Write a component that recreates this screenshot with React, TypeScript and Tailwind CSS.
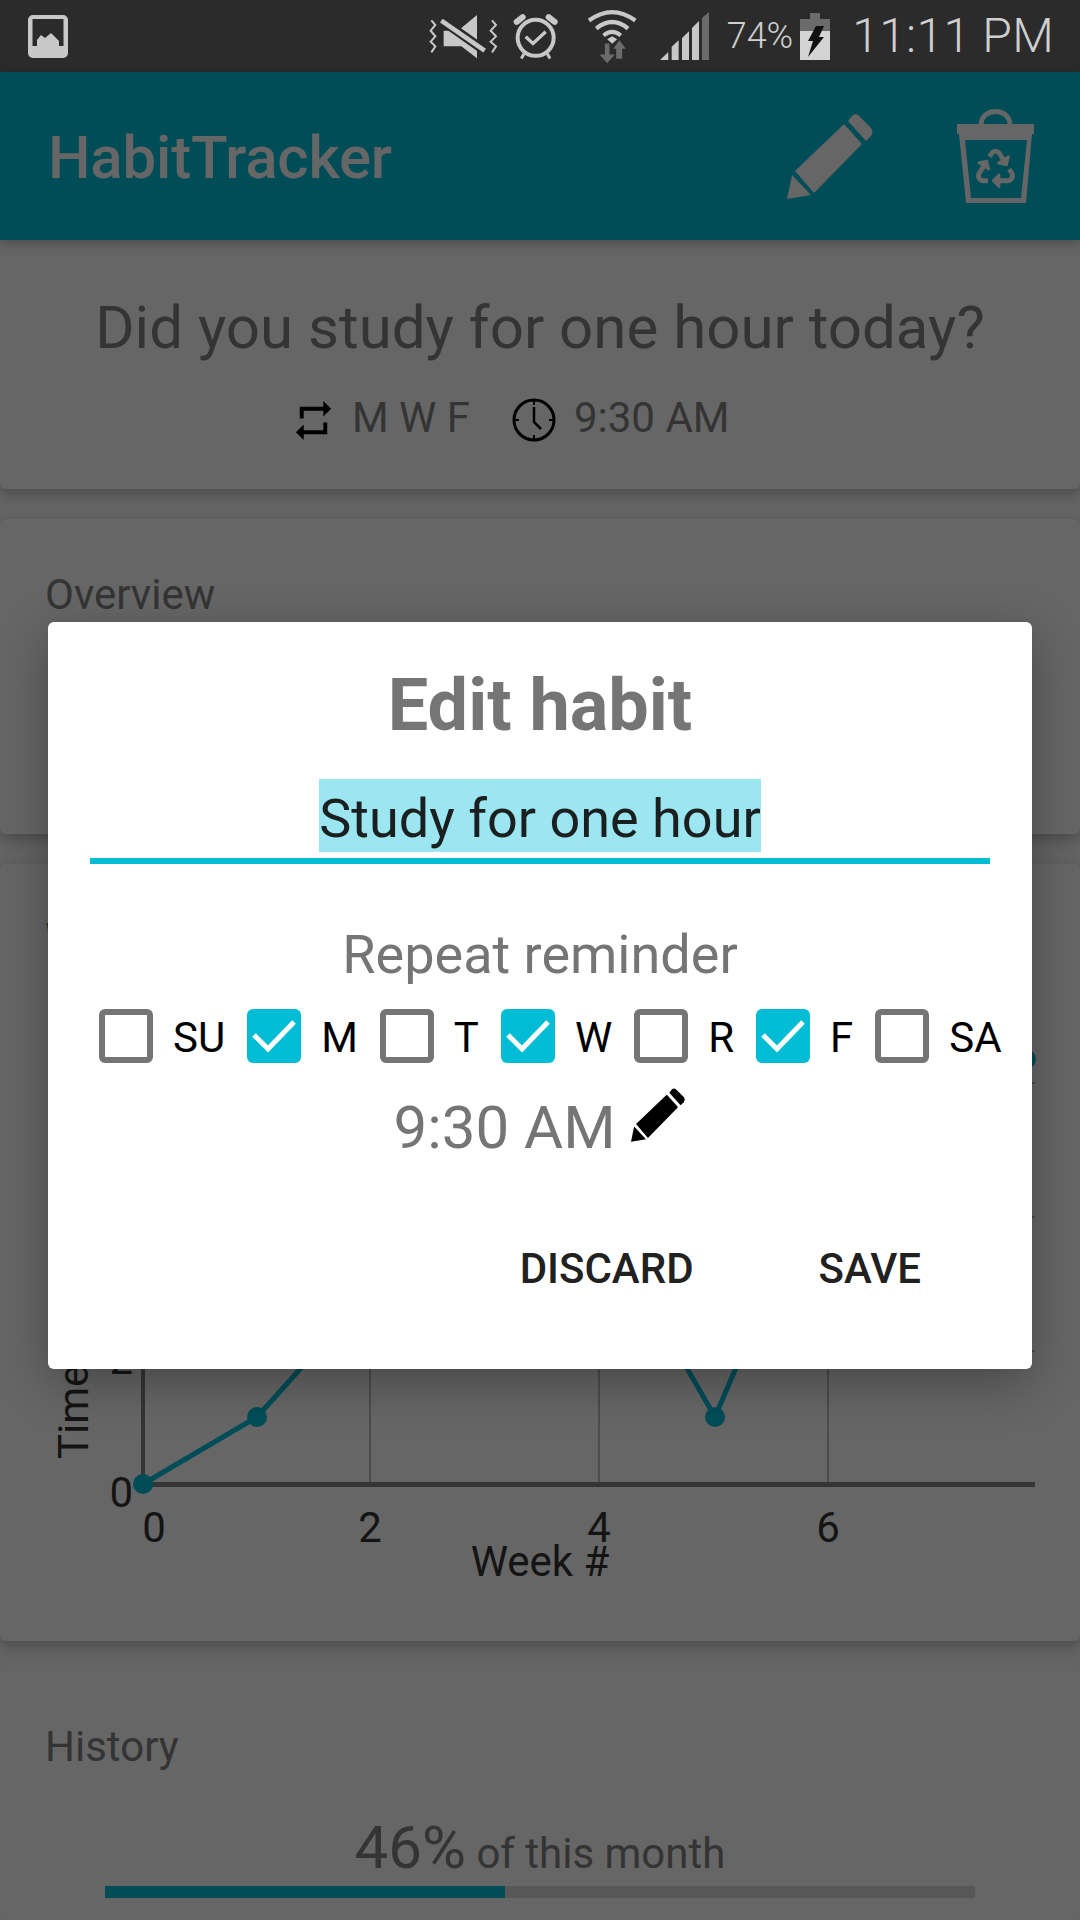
import { MdRepeat } from 'react-icons/md';
import { FaRecycle } from 'react-icons/fa';

const days = [
  { label: 'SU', on: false },
  { label: 'M', on: true },
  { label: 'T', on: false },
  { label: 'W', on: true },
  { label: 'R', on: false },
  { label: 'F', on: true },
  { label: 'SA', on: false },
];

function Pencil({ className }: { className: string }) {
  return (
    <svg viewBox="0 0 86 85" className={className} fill="currentColor">
      <path d="M0 85 L5 61 L24 81 Z" />
      <path d="M8 57 L56 11 Q57 10 58 11 L74 29 Q75 30 74 31 L27 79 Z" />
      <path d="M61 7 L65 2 Q68 -1 71 1 L84 14 Q87 18 84 22 L79 27 Z" />
    </svg>
  );
}

function TrashIcon() {
  return (
    <svg viewBox="0 0 77 94" className="w-[77px] h-[94px] text-[#666666]" fill="currentColor">
      <path d="M24 16 C24 -2 53 -2 53 16" fill="none" stroke="currentColor" strokeWidth="5" />
      <rect x="0" y="15" width="77" height="10" />
      <path fillRule="evenodd" d="M2 25 H75 L69 94 H9 Z M8 31 L14 89 H64 L70 31 Z" />
      <FaRecycle x={19} y={40} size={39} />
    </svg>
  );
}

function ImageNote() {
  return (
    <svg viewBox="0 0 40 43" className="w-[40px] h-[43px]">
      <rect width="40" height="43" rx="5" fill="#c8c8c8" />
      <rect x="4.5" y="4" width="31" height="27" fill="#2b2b2b" />
      <path d="M9 25 L13 20 L17 23 L23 18 L31 26 V31 H9 Z" fill="#c8c8c8" />
    </svg>
  );
}

function MuteIcon() {
  return (
    <svg viewBox="20 25 210 135" className="w-[70px] h-[45px]" fill="none">
      <path d="M30 44 L42 58 L28 75 L42 92 L28 108 L42 122 L30 140" stroke="#c8c8c8" strokeWidth="6" />
      <path d="M212 44 L224 58 L208 75 L224 92 L208 108 L224 122 L212 140" stroke="#c8c8c8" strokeWidth="6" />
      <path d="M67 75 H110 L167 28 V158 L120 122 H67 Z" fill="#c8c8c8" />
      <path d="M50 36 L200 142" stroke="#2b2b2b" strokeWidth="28" />
      <path d="M60 45 L190 135" stroke="#c8c8c8" strokeWidth="14" />
    </svg>
  );
}

function AlarmIcon() {
  return (
    <svg viewBox="270 24 138 140" className="w-[46px] h-[47px]" fill="none" stroke="#c8c8c8">
      <path d="M281 50 L299 36" strokeWidth="18" strokeLinecap="round" />
      <path d="M395 50 L377 36" strokeWidth="18" strokeLinecap="round" />
      <circle cx="338" cy="98" r="54" strokeWidth="12" />
      <path d="M308 95 L330 115 L368 80" strokeWidth="10" />
      <path d="M303 146 L295 160 M373 146 L381 160" strokeWidth="9" />
    </svg>
  );
}

function WifiIcon() {
  return (
    <svg viewBox="22 8 152 166" className="w-[51px] h-[55px]" fill="none">
      <path d="M30 43 Q100 -8 170 43" stroke="#c8c8c8" strokeWidth="13" />
      <path d="M52 67 Q100 28 148 67" stroke="#c8c8c8" strokeWidth="13" />
      <path d="M74 88 Q100 66 126 88" stroke="#c8c8c8" strokeWidth="12" />
      <path d="M85 99 L100 90 L115 99 L100 113 Z" fill="#c8c8c8" />
      <path d="M78 112 H92 V145 H108 L85 172 L62 145 H78 Z" fill="#6b6b6b" />
      <path d="M112 158 V128 H103 L122 102 L141 128 H130 V158 Z" fill="#6b6b6b" />
    </svg>
  );
}

function SignalIcon() {
  return (
    <svg viewBox="243 20 147 144" className="w-[49px] h-[48px]">
      <path d="M243 164 L268 140 V164 Z" fill="#c8c8c8" />
      <path d="M278 164 V124 L299 105 V164 Z" fill="#c8c8c8" />
      <path d="M309 164 V98 L330 78 V164 Z" fill="#c8c8c8" />
      <path d="M339 164 V68 L360 47 V164 Z" fill="#c8c8c8" />
      <path d="M369 164 V38 L390 20 V164 Z" fill="#6b6b6b" />
    </svg>
  );
}

function BatteryIcon() {
  return (
    <svg viewBox="0 0 30 47" className="w-[30px] h-[47px]">
      <rect x="10" y="0" width="10" height="7" fill="#6b6b6b" />
      <rect x="0" y="6" width="30" height="12" fill="#6b6b6b" />
      <rect x="0" y="18" width="30" height="29" fill="#d4d4d4" />
      <path d="M16 13 H24 L19 24 H24 L8 44 L13 28 H8 Z" fill="#111111" />
    </svg>
  );
}

function ClockIcon() {
  return (
    <svg viewBox="0 0 44 44" className="w-[44px] h-[44px] ml-[42px] shrink-0" fill="none" stroke="#000000">
      <circle cx="22" cy="22" r="20" strokeWidth="3" />
      <path d="M22 2 V7 M22 37 V42 M2 22 H7 M37 22 H42" strokeWidth="2" />
      <path d="M22 9 V24 L29 31" strokeWidth="2.5" />
    </svg>
  );
}

function WeekChart() {
  return (
    <svg viewBox="0 964 1080 626" className="block w-[1080px] h-[626px] font-[Roboto,sans-serif]" fill="none">
      <path d="M370 1000 V1484 M599 1000 V1484 M828 1000 V1484" stroke="#333333" strokeWidth="1" />
      <path d="M143 1351 H1035 M143 1217 H1035 M143 1083 H1035" stroke="#333333" strokeWidth="1" />
      <path d="M143 1000 V1484" stroke="#353535" strokeWidth="4" />
      <path d="M141 1484.5 H1035" stroke="#353535" strokeWidth="5" />
      <polyline points="143,1484 257,1417 372,1289 486,1217 600,1217 715,1417 829,1150 1026,1059" stroke="#004d58" strokeWidth="5" />
      <g fill="#004d58">
        <circle cx="143" cy="1484" r="10" />
        <circle cx="257" cy="1417" r="10" />
        <circle cx="715" cy="1417" r="10" />
        <circle cx="1026" cy="1059" r="10" />
      </g>
      <g fill="#141414" fontSize="42">
        <text x="133" y="1507" textAnchor="end">0</text>
        <text x="133" y="1374" textAnchor="end">2</text>
        <text x="154" y="1542" textAnchor="middle">0</text>
        <text x="370" y="1542" textAnchor="middle">2</text>
        <text x="599" y="1542" textAnchor="middle">4</text>
        <text x="828" y="1542" textAnchor="middle">6</text>
        <text x="540" y="1576" textAnchor="middle">Week #</text>
        <text x="88" y="1459" transform="rotate(-90 88 1459)">Time</text>
      </g>
    </svg>
  );
}

function DayCheck({ label, on }: { label: string; on: boolean }) {
  return (
    <div className="flex items-start">
      {on ? (
        <div className="w-[54px] h-[54px] rounded-[6px] bg-[#00bcd4]">
          <svg viewBox="0 0 54 54" className="w-[54px] h-[54px]" fill="none">
            <path d="M7 26 L21 40 L47 13" stroke="#ffffff" strokeWidth="5" />
          </svg>
        </div>
      ) : (
        <div className="w-[54px] h-[54px] rounded-[6px] border-[6px] border-[#757575]" />
      )}
      <span className="ml-[20px] text-[42px] leading-[58px] text-black">{label}</span>
    </div>
  );
}

export default function App() {
  return (
    <div className="relative w-[1080px] h-[1920px] overflow-hidden bg-[#646464] font-[Roboto,sans-serif]">
      {/* status bar */}
      <div className="flex items-center h-[72px] pl-[28px] pr-[26px] bg-[#2b2b2b]">
        <ImageNote />
        <div className="ml-auto flex items-center">
          <MuteIcon />
          <div className="ml-[15px]"><AlarmIcon /></div>
          <div className="ml-[27px]"><WifiIcon /></div>
          <div className="ml-[23px]"><SignalIcon /></div>
          <span className="ml-[18px] text-[36px] font-light text-[#cfcfcf]">74%</span>
          <div className="ml-[7px]"><BatteryIcon /></div>
          <span className="ml-[22px] text-[48px] font-light tracking-[0.3px] text-[#cfcfcf]">11:11 PM</span>
        </div>
      </div>

      {/* app bar */}
      <div className="relative z-10 flex items-center h-[168px] pl-[48px] bg-[#004d58] shadow-[0_4px_12px_rgba(0,0,0,0.25)]">
        <span className="mt-[4px] text-[60px] font-medium tracking-[-0.2px] text-[#666666]">HabitTracker</span>
        <Pencil className="ml-auto w-[86px] h-[85px] text-[#666666]" />
        <div className="ml-[84px] mr-[46px]"><TrashIcon /></div>
      </div>

      {/* cards under the dim */}
      <div className="flex flex-col">
        <div className="h-[249px] pt-[53px] rounded-[6px] bg-[#666666] text-[#343434] shadow-[0_5px_14px_rgba(0,0,0,0.25)]">
          <div className="text-center text-[60px] leading-[70px]">Did you study for one hour today?</div>
          <div className="flex items-center h-[54px] mt-[30px] pl-[290px]">
            <MdRepeat size={47} color="#000000" className="shrink-0" />
            <span className="self-start ml-[15px] text-[42px] leading-[50px]">M W F</span>
            <ClockIcon />
            <span className="self-start ml-[18px] text-[42px] leading-[50px]">9:30 AM</span>
          </div>
        </div>

        <div className="h-[315px] mt-[30px] pt-[51px] pl-[45px] rounded-[6px] bg-[#666666] text-[#343434] text-[42px] leading-[50px] shadow-[0_5px_14px_rgba(0,0,0,0.25)]">
          Overview
        </div>

        <div className="h-[777px] mt-[30px] pt-[50px] rounded-[6px] bg-[#666666] text-[#343434] shadow-[0_5px_14px_rgba(0,0,0,0.25)]">
          <div className="pl-[45px] text-[42px] leading-[50px]">W</div>
          <WeekChart />
        </div>

        <div className="h-[249px] mt-[30px] pt-[51px] rounded-[6px] bg-[#666666] text-[#343434]">
          <div className="pl-[45px] text-[42px] leading-[50px]">History</div>
          <div className="h-[70px] mt-[41px] text-center text-[42px] leading-[70px]">
            <span className="text-[60px]">46%</span> of this month
          </div>
          <div className="h-[12px] mt-[3px] mx-[105px] bg-[#575757]">
            <div className="w-[46%] h-full bg-[#004d58]" />
          </div>
        </div>
      </div>

      {/* edit dialog */}
      <div className="absolute z-20 left-[48px] top-[622px] w-[984px] h-[747px] pt-[42px] rounded-[6px] bg-white shadow-[0_14px_50px_rgba(0,0,0,0.3)]">
        <div className="text-center text-[72px] leading-[84px] font-bold text-[#757575]">Edit habit</div>

        <div className="mt-[31px] mx-[42px] pb-[6px] border-b-[6px] border-[#00bcd4] text-center">
          <span className="inline-block align-top h-[73px] bg-[#9ce6f1] text-[54px] leading-[79px] text-[#1a1f20]">
            Study for one hour
          </span>
        </div>

        <div className="mt-[59px] text-center text-[54px] leading-[64px] text-[#757575]">Repeat reminder</div>

        <div className="flex mt-[22px] pl-[51px] gap-[22px]">
          {days.map((d) => (
            <DayCheck key={d.label} label={d.label} on={d.on} />
          ))}
        </div>

        <div className="flex items-start justify-center mt-[21px] pr-[2px]">
          <span className="mt-[5px] text-[60px] leading-[70px] text-[#757575]">9:30 AM</span>
          <Pencil className="ml-[15px] w-[54px] h-[54px] text-black" />
        </div>

        <div className="flex justify-end mt-[81px] pr-[111px] gap-[125px] text-[42px] leading-[50px] font-medium text-[#212121]">
          <span>DISCARD</span>
          <span>SAVE</span>
        </div>
      </div>
    </div>
  );
}
